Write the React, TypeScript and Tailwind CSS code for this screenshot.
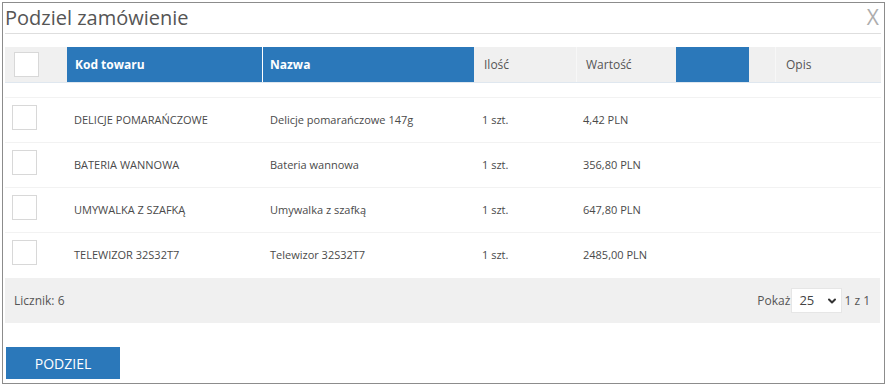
import { ChevronDown } from "lucide-react";

const rows = [
  { code: "DELICJE POMARAŃCZOWE", name: "Delicje pomarańczowe 147g", qty: "1 szt.", value: "4,42 PLN" },
  { code: "BATERIA WANNOWA", name: "Bateria wannowa", qty: "1 szt.", value: "356,80 PLN" },
  { code: "UMYWALKA Z SZAFKĄ", name: "Umywalka z szafką", qty: "1 szt.", value: "647,80 PLN" },
  { code: "TELEWIZOR 32S32T7", name: "Telewizor 32S32T7", qty: "1 szt.", value: "2485,00 PLN" },
];

const cols = "grid grid-cols-[62px_196px_211px_103px_99px_73px_27px_104px]";

const Checkbox = () => (
  <div className="h-[25px] w-[25px] border border-[#d8d8d8] bg-white" />
);

export default function App() {
  return (
    <div className="h-[389px] w-[887px] bg-white pl-[2px] pt-[2px] font-['Open_Sans',sans-serif]">
      <div className="flex h-[382px] w-[883px] flex-col border border-[#8c8c8c] bg-white pl-[2px] pr-[3px]">
        <div className="flex h-[31px] items-start justify-between border-b border-[#dedede]">
          <h1 className="pt-[1px] text-[20px] leading-[28px] text-[#555]">Podziel zamówienie</h1>
          <span className="pr-[2px] pt-[1px] text-[21px] leading-[26px] text-[#adadad]">X</span>
        </div>

        <div className="mt-[13px]">
          <div className={`${cols} h-[36px] border-b border-[#dfe7ef] bg-[#f0f0f0] text-[12px]`}>
            <div className="flex items-center pl-[9px]">
              <Checkbox />
            </div>
            <div className="flex items-center border-r border-white bg-[#2b78ba] pl-[8px] font-bold text-white">
              Kod towaru
            </div>
            <div className="flex items-center bg-[#2b78ba] pl-[7px] font-bold text-white">Nazwa</div>
            <div className="flex items-center border-r border-[#f7f7f7] pl-[10px] text-[#555]">Ilość</div>
            <div className="flex items-center pl-[9px] text-[#555]">Wartość</div>
            <div className="bg-[#2b78ba]" />
            <div className="border-r border-[#f7f7f7]" />
            <div className="flex items-center pl-[10px] text-[#555]">Opis</div>
          </div>

          <div className="h-[15px] border-b border-[#f2f2f2]" />

          {rows.map((r, i) => (
            <div
              key={r.code}
              className={`${cols} h-[45px] text-[11px] text-[#4a4a4a] ${i < rows.length - 1 ? "border-b border-[#f2f2f2]" : ""}`}
            >
              <div className="pl-[7px] pt-[7px]">
                <Checkbox />
              </div>
              <div className="flex items-center pl-[7px]">{r.code}</div>
              <div className="flex items-center pl-[7px]">{r.name}</div>
              <div className="flex items-center pl-[8px]">{r.qty}</div>
              <div className="flex items-center pl-[6px]">{r.value}</div>
              <div />
              <div />
              <div />
            </div>
          ))}
        </div>

        <div className="mr-[1px] flex h-[45px] items-center justify-between bg-[#f0f0f0] pl-[9px] pr-[10px] text-[12px] text-[#555]">
          <span>Licznik: 6</span>
          <div className="flex items-center">
            <span>Pokaż</span>
            <div className="ml-[1px] flex h-[25px] w-[51px] items-center justify-between border border-[#e6e6e6] bg-white pl-[7px] pr-[3px] text-[13px] text-[#444]">
              <span>25</span>
              <ChevronDown className="h-[12px] w-[12px] text-[#333]" strokeWidth={4} />
            </div>
            <span className="ml-[2px]">1 z 1</span>
          </div>
        </div>

        <div className="mt-[24px] pl-[1px]">
          <button className="h-[32px] w-[114px] bg-[#2b78ba] text-[14px] text-white">PODZIEL</button>
        </div>
      </div>
    </div>
  );
}
